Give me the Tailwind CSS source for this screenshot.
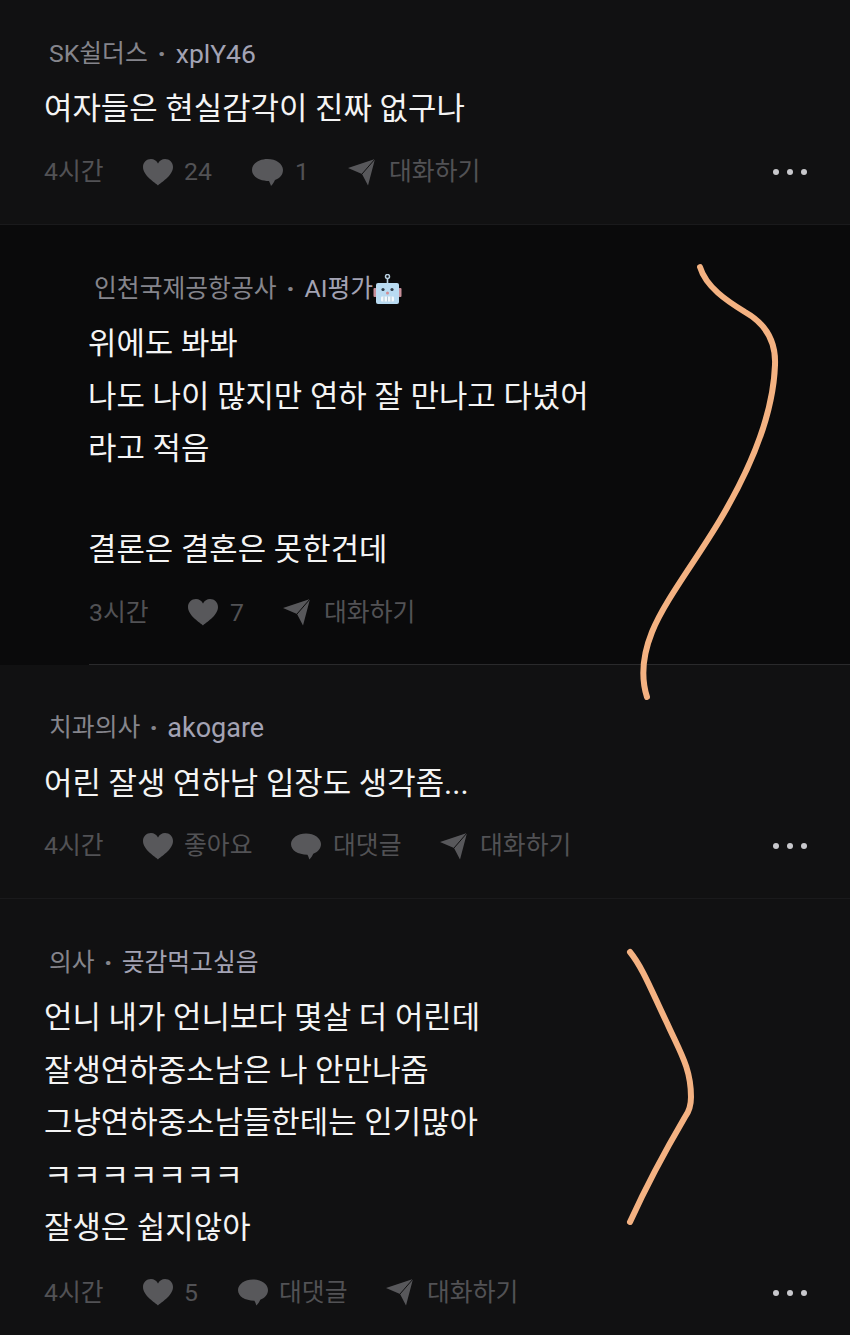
<!DOCTYPE html>
<html lang="ko">
<head>
  <meta charset="UTF-8">
  <meta name="viewport" content="width=device-width, initial-scale=1.0">
  <script src="https://cdn.jsdelivr.net/npm/@tailwindcss/browser@4"></script>
  <title>댓글</title>
</head>
<body class="bg-[#111112] font-['Roboto','Noto_Sans_CJK_KR',sans-serif]">
  <div class="relative w-[850px] h-[1335px] overflow-hidden">

    <!-- 댓글 1 -->
    <section class="h-[225px] pt-[36px] pl-[45px] pr-[43px] border-b border-[#1a1a1c]">
      <div class="flex items-center h-[36px] pl-[4px] text-[24.800px] text-[#85858c]">
        <span>SK쉴더스</span><span class="w-[28px] text-center text-[28px] font-bold">·</span><span class="text-[26.500px] text-[#a3a3b4]">xplY46</span>
      </div>
      <p class="mt-[11px] -ml-[1px] text-[30.900px] leading-[52px] text-[#f4f4f4]">여자들은 현실감각이 진짜 없구나</p>
      <div class="flex items-center h-[36px] mt-[19px] text-[24.800px] text-[#525255]">
        <span class="w-[98px] -ml-[1px] mr-[1px]">4시간</span>
        <svg class="w-[30px] h-[27px] mr-[11px]" viewBox="0 0 30 27"><path fill="#58585b" d="M15 26.500C13 24 0 17 0 8 0 3.500 3.500 0 8 0c3 0 5.500 1.500 7 4.500C16.500 1.500 19 0 22 0c4.500 0 8 3.500 8 8 0 9-13 16-15 18.500z"/></svg>
        <span class="w-[68px]">24</span>
        <svg class="w-[31px] h-[27px] mr-[12px]" viewBox="0 0 31 27"><path fill="#58585b" d="M15.500 0C24 0 31 4.800 31 11c0 5-3.500 8.500-8 10-1 2-2 4-4 6-.5-1.500-1-3-2-5C7 22 0 17.500 0 11 0 4.800 7 0 15.500 0z"/></svg>
        <span class="w-[53px]">1</span>
        <svg class="w-[27px] h-[27px] mr-[14px]" viewBox="0 0 27 27"><path fill="#58585b" d="M0 9 27 0 20 26.500 14 15z"/><path stroke="#111112" d="M27 0 14 15"/></svg>
        <span>대화하기</span>
        <div class="ml-auto flex gap-[8px]">
          <i class="block w-[6px] h-[6px] rounded-full bg-[#c8c8cc]"></i>
          <i class="block w-[6px] h-[6px] rounded-full bg-[#c8c8cc]"></i>
          <i class="block w-[6px] h-[6px] rounded-full bg-[#c8c8cc]"></i>
        </div>
      </div>
    </section>

    <!-- 대댓글 -->
    <section class="h-[440px] pt-[46px] pl-[89px] bg-[#0a0a0b] border-b border-[#2a2a2c] relative">
      <div class="flex items-center h-[36px] pl-[5px] text-[24.800px] text-[#85858c]">
        <span>인천국제공항공사</span><span class="w-[28px] text-center text-[28px] font-bold">·</span><span class="text-[#a3a3b4]">AI평가</span>
        <svg class="w-[30px] h-[30px]" viewBox="0 0 30 30">
          <circle cx="14.500" cy="2.500" r="2" fill="none" stroke="#b8cfe0" stroke-width="1.500"/>
          <rect x="13.700" y="4" width="1.600" height="5" fill="#b8cfe0"/>
          <rect x="0.500" y="14" width="3" height="9" rx="1" fill="#c78f9a"/>
          <rect x="25.500" y="14" width="3" height="9" rx="1" fill="#c78f9a"/>
          <rect x="3" y="9" width="23" height="21" rx="2" fill="#b9dbf2"/>
          <circle cx="10" cy="15.500" r="1.600" fill="#2d3a46"/>
          <circle cx="19" cy="15.500" r="1.600" fill="#2d3a46"/>
          <circle cx="14.500" cy="19" r="1.500" fill="#d58c92"/>
          <rect x="8" y="22.500" width="13" height="5" rx="1" fill="#f2f8fc"/>
          <path stroke="#9db9cc" stroke-width=".8" d="M11 22.500v5M14.500 22.500v5M18 22.500v5"/>
        </svg>
      </div>
      <p class="mt-[11px] -ml-[1px] text-[30.900px] leading-[52.500px] text-[#f4f4f4] whitespace-pre-line">위에도 봐봐
나도 나이 많지만 연하 잘 만나고 다녔어
라고 적음</p>
      <p class="mt-[48px] -ml-[1px] text-[30.900px] leading-[52px] text-[#f4f4f4]">결론은 결혼은 못한건데</p>
      <div class="flex items-center h-[36px] mt-[19px] text-[24.800px] text-[#525255]">
        <span class="w-[99px]">3시간</span>
        <svg class="w-[30px] h-[27px] mr-[12px]" viewBox="0 0 30 27"><path fill="#58585b" d="M15 26.500C13 24 0 17 0 8 0 3.500 3.500 0 8 0c3 0 5.500 1.500 7 4.500C16.500 1.500 19 0 22 0c4.500 0 8 3.500 8 8 0 9-13 16-15 18.500z"/></svg>
        <span class="w-[53px]">7</span>
        <svg class="w-[27px] h-[27px] mr-[14px]" viewBox="0 0 27 27"><path fill="#58585b" d="M0 9 27 0 20 26.500 14 15z"/><path stroke="#0a0a0b" d="M27 0 14 15"/></svg>
        <span>대화하기</span>
      </div>
      <div class="absolute left-0 bottom-[-1px] w-[89px] h-px bg-[#0a0a0b]"></div>
    </section>

    <!-- 댓글 2 -->
    <section class="h-[234px] pt-[45px] pl-[45px] pr-[43px] border-b border-[#1a1a1c]">
      <div class="flex items-center h-[36px] pl-[4px] text-[24.800px] text-[#85858c]">
        <span>치과의사</span><span class="w-[27px] text-center text-[28px] font-bold">·</span><span class="text-[27px] text-[#a3a3b4]">akogare</span>
      </div>
      <p class="mt-[12px] -ml-[1px] text-[30.900px] leading-[52px] text-[#f4f4f4]">어린 잘생 연하남 입장도 생각좀...</p>
      <div class="flex items-center h-[36px] mt-[18px] text-[24.800px] text-[#525255]">
        <span class="w-[98px] -ml-[1px] mr-[1px]">4시간</span>
        <svg class="w-[30px] h-[27px] mr-[11px]" viewBox="0 0 30 27"><path fill="#58585b" d="M15 26.500C13 24 0 17 0 8 0 3.500 3.500 0 8 0c3 0 5.500 1.500 7 4.500C16.500 1.500 19 0 22 0c4.500 0 8 3.500 8 8 0 9-13 16-15 18.500z"/></svg>
        <span class="w-[107px]">좋아요</span>
        <svg class="w-[30px] h-[27px] mr-[12px]" viewBox="0 0 31 27"><path fill="#58585b" d="M15.500 0C24 0 31 4.800 31 11c0 5-3.500 8.500-8 10-1 2-2 4-4 6-.5-1.500-1-3-2-5C7 22 0 17.500 0 11 0 4.800 7 0 15.500 0z"/></svg>
        <span class="w-[107px]">대댓글</span>
        <svg class="w-[27px] h-[27px] mr-[13px]" viewBox="0 0 27 27"><path fill="#58585b" d="M0 9 27 0 20 26.500 14 15z"/><path stroke="#111112" d="M27 0 14 15"/></svg>
        <span>대화하기</span>
        <div class="ml-auto flex gap-[8px]">
          <i class="block w-[6px] h-[6px] rounded-full bg-[#c8c8cc]"></i>
          <i class="block w-[6px] h-[6px] rounded-full bg-[#c8c8cc]"></i>
          <i class="block w-[6px] h-[6px] rounded-full bg-[#c8c8cc]"></i>
        </div>
      </div>
    </section>

    <!-- 댓글 3 -->
    <section class="pt-[46px] pl-[45px] pr-[43px]">
      <div class="flex items-center h-[36px] pl-[4px] text-[24.800px] text-[#85858c]">
        <span>의사</span><span class="w-[27px] text-center text-[28px] font-bold">·</span><span class="text-[#a3a3b4]">곶감먹고싶음</span>
      </div>
      <p class="mt-[11px] -ml-[1px] text-[30.900px] leading-[52.500px] text-[#f4f4f4] whitespace-pre-line">언니 내가 언니보다 몇살 더 어린데
잘생연하중소남은 나 안만나줌
그냥연하중소남들한테는 인기많아
ㅋㅋㅋㅋㅋㅋㅋ
잘생은 쉽지않아</p>
      <div class="flex items-center h-[36px] mt-[20px] text-[24.800px] text-[#525255]">
        <span class="w-[98px] -ml-[1px] mr-[1px]">4시간</span>
        <svg class="w-[30px] h-[27px] mr-[11px]" viewBox="0 0 30 27"><path fill="#58585b" d="M15 26.500C13 24 0 17 0 8 0 3.500 3.500 0 8 0c3 0 5.500 1.500 7 4.500C16.500 1.500 19 0 22 0c4.500 0 8 3.500 8 8 0 9-13 16-15 18.500z"/></svg>
        <span class="w-[54px]">5</span>
        <svg class="w-[30px] h-[27px] mr-[11px]" viewBox="0 0 31 27"><path fill="#58585b" d="M15.500 0C24 0 31 4.800 31 11c0 5-3.500 8.500-8 10-1 2-2 4-4 6-.5-1.500-1-3-2-5C7 22 0 17.500 0 11 0 4.800 7 0 15.500 0z"/></svg>
        <span class="w-[107px]">대댓글</span>
        <svg class="w-[27px] h-[27px] mr-[14px]" viewBox="0 0 27 27"><path fill="#58585b" d="M0 9 27 0 20 26.500 14 15z"/><path stroke="#111112" d="M27 0 14 15"/></svg>
        <span>대화하기</span>
        <div class="ml-auto flex gap-[8px]">
          <i class="block w-[6px] h-[6px] rounded-full bg-[#c8c8cc]"></i>
          <i class="block w-[6px] h-[6px] rounded-full bg-[#c8c8cc]"></i>
          <i class="block w-[6px] h-[6px] rounded-full bg-[#c8c8cc]"></i>
        </div>
      </div>
    </section>

    <!-- 손으로 그린 주황색 선 -->
    <svg class="absolute inset-0 pointer-events-none" width="850" height="1335" fill="none" stroke="#f4b282" stroke-width="6" stroke-linecap="round" stroke-linejoin="round">
      <path d="M700 267C706 287 727 301 745 312C766 324 776 342 775 365C773 420 745 478 720 520C695 562 665 600 652 632C644 652 640 675 647 697"/>
      <path d="M630 952C643 968 652 992 667 1023C680 1052 691 1068 691 1097C691 1108 688 1113 685 1117C668 1146 650 1178 630 1222"/>
    </svg>
  </div>
</body>
</html>
